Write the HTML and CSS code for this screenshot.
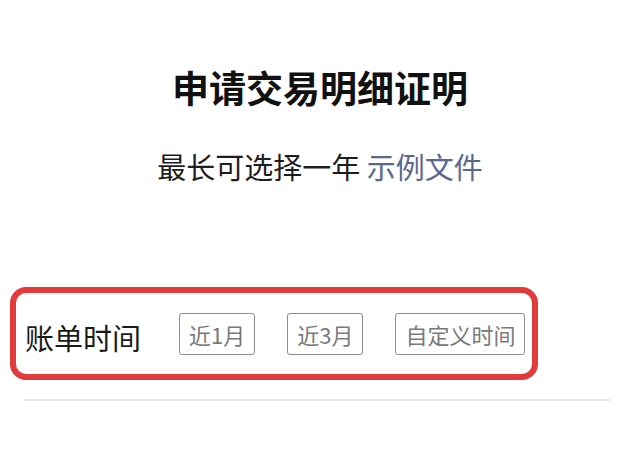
FILE: index.html
```html
<!DOCTYPE html>
<html lang="zh-CN">
<head>
<meta charset="utf-8">
<link rel="stylesheet" href="styles.css">
</head>
<body>
<main class="page">
  <h1 class="title">申请交易明细证明</h1>
  <p class="subtitle">最长可选择一年 <a class="link">示例文件</a></p>
  <section class="highlight">
    <div class="row">
      <span class="label">账单时间</span>
      <div class="options">
        <button class="opt">近1月</button>
        <button class="opt">近3月</button>
        <button class="opt">自定义时间</button>
      </div>
    </div>
  </section>
  <hr class="divider">
</main>
</body>
</html>
```
FILE: styles.css
```css
* { box-sizing: border-box; }
html, body { margin: 0; padding: 0; background: #ffffff; }
body {
  width: 640px;
  height: 453px;
  overflow: hidden;
  font-family: "Noto Sans CJK SC", "Noto Sans", sans-serif;
  color: #1a1a1a;
}
.page {
  display: flex;
  flex-direction: column;
  padding-top: 65px;
}
.title {
  margin: 0;
  text-align: center;
  font-size: 37px;
  line-height: 44px;
  font-weight: 700;
  color: #111;
}
.subtitle {
  margin: 40px 0 0;
  text-align: center;
  font-size: 29px;
  line-height: 35px;
  font-weight: 400;
  color: #1e1e1e;
}
.link { color: #5a6890; text-decoration: none; }
.highlight {
  margin: 103px 0 0 10px;
  width: 528px;
  height: 93px;
  border: 6px solid #e23b3b;
  border-radius: 16px;
  display: flex;
  align-items: center;
  padding-left: 9px;
}
.row {
  display: flex;
  align-items: center;
  white-space: nowrap;
  flex-shrink: 0;
}
.label {
  font-size: 29px;
  line-height: 34px;
  color: #1a1a1a;
  margin-top: 6px;
  flex-shrink: 0;
}
.options {
  display: flex;
  gap: 32px;
  margin-left: 38px;
  flex-shrink: 0;
}
.opt {
  font-family: "Noto Sans CJK SC", "Noto Sans", sans-serif;
  white-space: nowrap;
  flex-shrink: 0;
  height: 42px;
  padding: 0 9px;
  font-size: 22px;
  line-height: 1;
  color: #7a7a7a;
  background: #fff;
  border: 1.5px solid #8c8c8c;
  border-radius: 3px;
  display: flex;
  align-items: center;
}
.divider {
  margin: 19px 0 0 24px;
  width: 586px;
  height: 2px;
  border: 0;
  background: #e8e8e8;
}
```
